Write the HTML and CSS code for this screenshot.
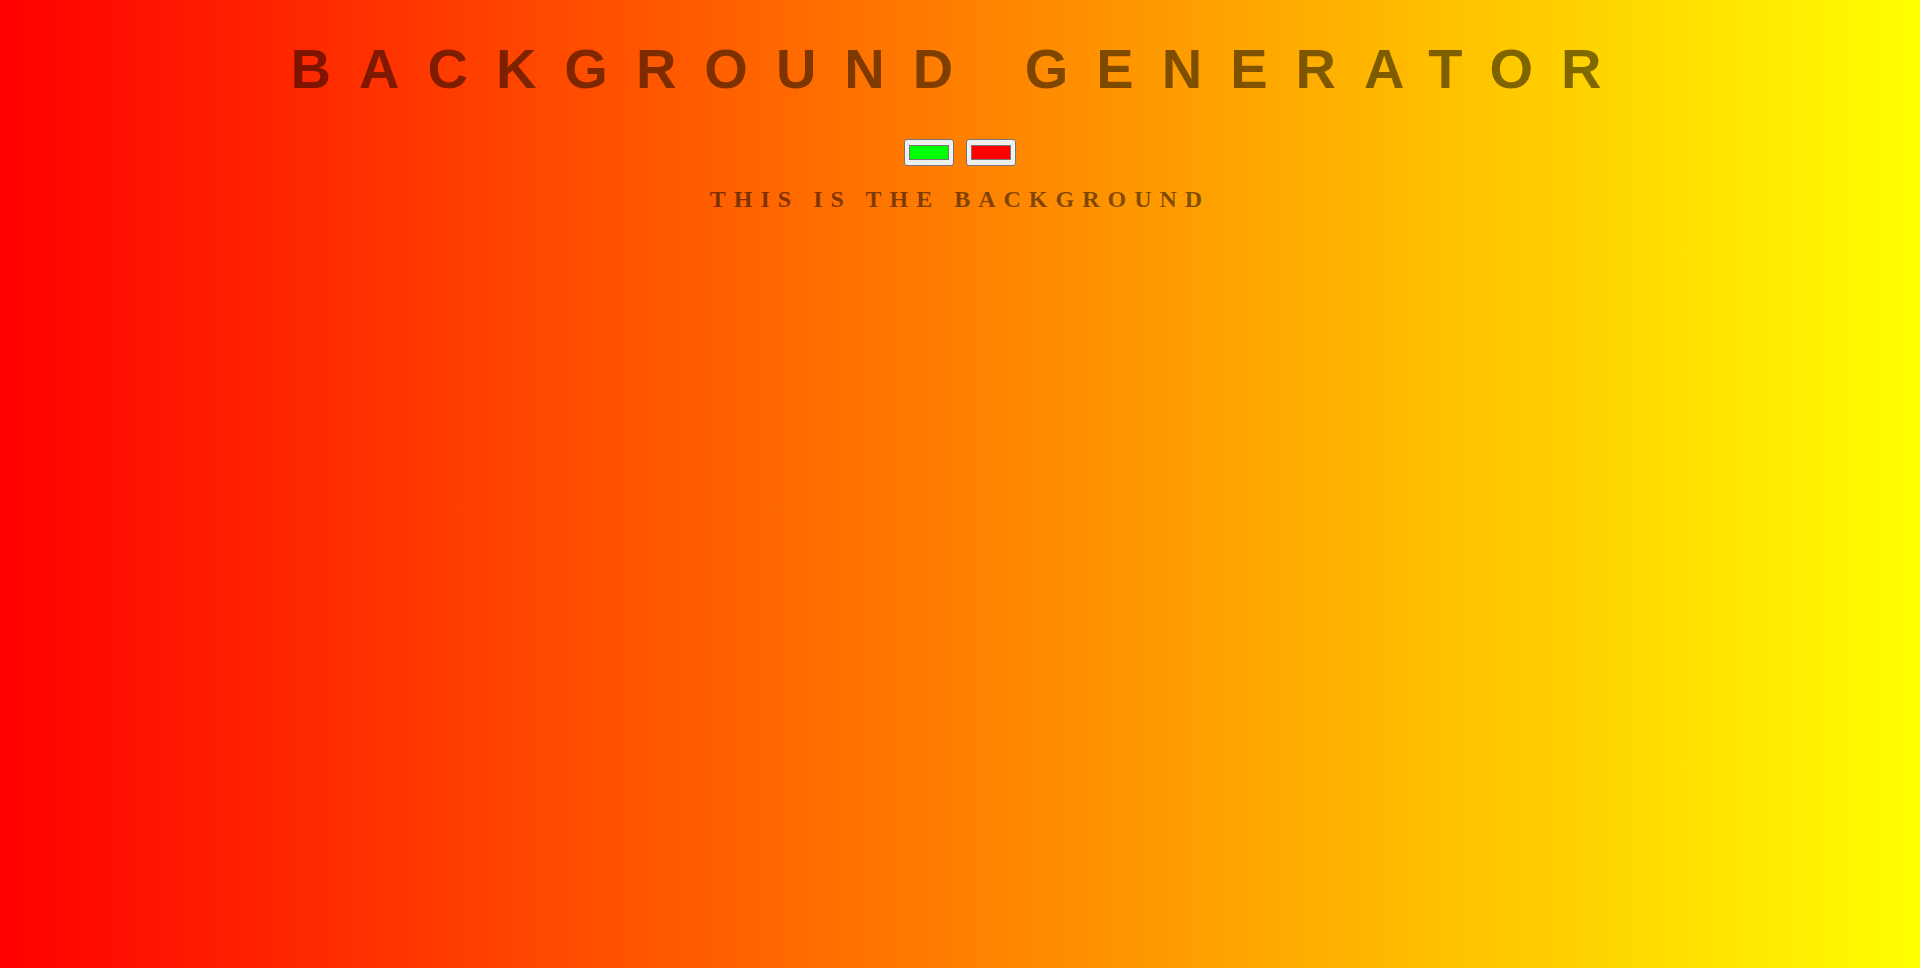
FILE: index.html
```html
<!DOCTYPE html>
<html>
<head>
<meta charset="utf-8">
<title>Background Generator</title>
<link rel="stylesheet" href="styles.css">
</head>
<body class="page">
<h1 class="title">Background Generator</h1>
<input class="picker" type="color" name="color1" value="#00ff00">
<input class="picker" type="color" name="color2" value="#ff0000">
<h3 class="subtitle">This is the background</h3>
</body>
</html>
```
FILE: styles.css
```css
html {
  background: linear-gradient(to right, #ff0000, #ffff00);
  min-height: 100%;
}
.page {
  margin: 8px;
  font-family: "Liberation Serif", serif;
  font-size: 16px;
  color: rgba(0, 0, 0, 0.5);
  text-align: center;
  text-transform: uppercase;
  letter-spacing: 8px;
}
.title {
  font: bold 56px "Liberation Sans", Arial, sans-serif;
  letter-spacing: 28px;
  margin: 28px 0 37.5px;
}
.picker {
  width: 50px;
  height: 27px;
  box-sizing: border-box;
  padding: 1px 2px;
  background: #efefef;
  border: 1px solid #767676;
  border-radius: 3px;
  vertical-align: baseline;
}
.picker::-webkit-color-swatch-wrapper {
  padding: 4px 2px;
}
.picker::-webkit-color-swatch {
  border: 1px solid #777777;
  border-radius: 0;
}
.subtitle {
  font: bold 24px "Liberation Serif", serif;
  letter-spacing: 8px;
  margin: 20px 0 18px;
}
```
